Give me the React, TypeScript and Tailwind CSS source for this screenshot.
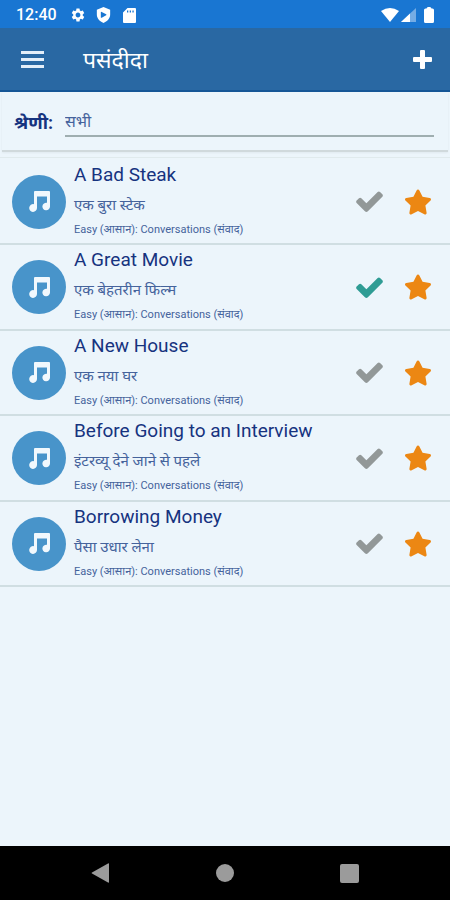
import { useState } from "react";
import { FaStar } from "react-icons/fa";
import { MdSettings } from "react-icons/md";

type Lesson = { title: string; hindi: string; done: boolean };

const lessons: Lesson[] = [
  { title: "A Bad Steak", hindi: "एक बुरा स्टेक", done: false },
  { title: "A Great Movie", hindi: "एक बेहतरीन फिल्म", done: true },
  { title: "A New House", hindi: "एक नया घर", done: false },
  { title: "Before Going to an Interview", hindi: "इंटरव्यू देने जाने से पहले", done: false },
  { title: "Borrowing Money", hindi: "पैसा उधार लेना", done: false },
];

function StatusBar() {
  return (
    <div className="flex h-7 items-center justify-between bg-[#1976d2] px-4 pt-[2px] text-white">
      <div className="flex items-center">
        <span className="w-[54px] text-base font-medium">12:40</span>
        <MdSettings className="size-4" />
        <svg viewBox="0 0 16 18" className="ml-[10px] h-4 w-[15px]" aria-hidden="true">
          <path
            fillRule="evenodd"
            fill="currentColor"
            d="M8 0 15.500 3V8.500C15.500 13 12 16.500 8 18 4 16.500 .500 13 .500 8.500V3ZM6 5.500Q5 5 5 6V11.500Q5 12.500 6 12L11 9.300Q11.700 8.700 11 8.200Z"
          />
        </svg>
        <svg viewBox="0 0 13 15" className="ml-3 h-[15px] w-[13px]" aria-hidden="true">
          <path
            fillRule="evenodd"
            fill="currentColor"
            d="M4.500 0H12Q13 0 13 1V14Q13 15 12 15H1Q0 15 0 14V4.500ZM4 2.500V4.500H5.300V2.500ZM6.700 2.500V4.500H8V2.500ZM9.400 2.500V4.500H10.700V2.500Z"
          />
        </svg>
      </div>
      <div className="flex items-center">
        <svg viewBox="0 0 18 14" className="h-[14px] w-[18px]" aria-hidden="true">
          <path fill="currentColor" d="M0 3Q9-3 18 3L9 14Z" />
        </svg>
        <svg viewBox="0 0 15 14" className="ml-[2px] h-[14px] w-[15px]" aria-hidden="true">
          <path fill="currentColor" opacity=".4" d="M15 0V14H0Z" />
          <path fill="currentColor" d="M9 5.600V14H0Z" />
        </svg>
        <svg viewBox="0 0 10 16" className="ml-2 h-4 w-[10px]" aria-hidden="true">
          <path
            fill="currentColor"
            d="M4 0H6Q7 0 7.500 1.500H8.500Q10 1.500 10 3V14.500Q10 16 8.500 16H1.500Q0 16 0 14.500V3Q0 1.500 1.500 1.500H2.500Q3 0 4 0Z"
          />
        </svg>
      </div>
    </div>
  );
}

function Header() {
  return (
    <header className="flex h-16 items-center border-b-2 border-[#155696] bg-[#2968a3] pr-[18px] pl-[21px] text-white">
      <button type="button" aria-label="Menu" className="text-[#e3eef9]">
        <svg viewBox="0 0 23 17" className="h-[17px] w-[23px]" aria-hidden="true">
          <path fill="currentColor" d="M0 0H23V3H0ZM0 7H23V10H0ZM0 14H23V17H0Z" />
        </svg>
      </button>
      <h1 className="ml-[39px] flex-1 pt-1 text-[23px] leading-8">पसंदीदा</h1>
      <button type="button" aria-label="Add">
        <svg viewBox="0 0 19 19" className="size-[19px]" aria-hidden="true">
          <path
            fill="currentColor"
            d="M8 0H11Q12 0 12 1V7H18Q19 7 19 8V11Q19 12 18 12H12V18Q12 19 11 19H8Q7 19 7 18V12H1Q0 12 0 11V8Q0 7 1 7H7V1Q7 0 8 0Z"
          />
        </svg>
      </button>
    </header>
  );
}

function MusicBadge() {
  return (
    <span className="flex size-[54px] shrink-0 items-center justify-center rounded-full bg-[#4894ca]">
      <svg viewBox="0 0 21 21" className="size-[21px]" aria-hidden="true">
        <path
          fill="#f1f8fd"
          d="M6 0H20Q21 0 21 1V15.500A3.800 3.800 0 1 1 18 11.800V5.500H8V17A3.900 3.900 0 1 1 5 13.200V1Q5 0 6 0Z"
        />
      </svg>
    </span>
  );
}

function LessonRow({ lesson }: { lesson: Lesson }) {
  const [done, setDone] = useState(lesson.done);
  const [starred, setStarred] = useState(true);
  return (
    <li className="flex h-[85px] items-center border-b-2 border-[#d0dee2] pr-[18px] pl-3 even:h-[86px]">
      <MusicBadge />
      <div className="ml-2 min-w-0 flex-1 pb-1">
        <h2 className="text-[19px] leading-7 text-[#16337f]">{lesson.title}</h2>
        <p className="text-[15px] leading-8 text-[#45639c]">{lesson.hindi}</p>
        <p className="text-[11px] leading-[18px] text-[#45639c]">Easy (आसान): Conversations (संवाद)</p>
      </div>
      <button
        type="button"
        aria-label="Completed"
        aria-pressed={done}
        onClick={() => setDone(!done)}
        className={done ? "text-[#2f9c94]" : "text-[#929898]"}
      >
        <svg viewBox="121 302 1550 1220" className="h-[21px] w-[27px]" aria-hidden="true">
          <path
            fill="currentColor"
            d="M1671 566q0 40-28 68l-724 724-136 136q-28 28-68 28t-68-28l-136-136-362-362q-28-28-28-68t28-68l136-136q28-28 68-28t68 28l294 295 656-657q28-28 68-28t68 28l136 136q28 28 28 68z"
          />
        </svg>
      </button>
      <button
        type="button"
        aria-label="Favorite"
        aria-pressed={starred}
        onClick={() => setStarred(!starred)}
        className={starred ? "ml-[21px] text-[#ec8713]" : "ml-[21px] text-[#929898]"}
      >
        <FaStar className="size-7" />
      </button>
    </li>
  );
}

function NavBar() {
  return (
    <nav className="flex h-[54px] items-center justify-between bg-black px-[91px] text-[#9b9b9b]">
      <button type="button" aria-label="Back">
        <svg viewBox="0 0 18 20" className="h-5 w-[18px]" aria-hidden="true">
          <path fill="currentColor" d="M18 1V19Q18 20 17 19.500L1 10.500Q0 10 1 9.500L17 .500Q18 0 18 1Z" />
        </svg>
      </button>
      <button type="button" aria-label="Home" className="size-[18px] rounded-full bg-[#9b9b9b]" />
      <button type="button" aria-label="Recent apps" className="size-[19px] rounded-xs bg-[#9b9b9b]" />
    </nav>
  );
}

export default function App() {
  return (
    <div className="flex min-h-screen flex-col bg-[#ecf5fb] font-[Roboto,'Noto_Sans',sans-serif]">
      <StatusBar />
      <Header />
      <main className="flex-1">
        <div className="mx-[2px] flex h-[60px] items-center border-b-2 border-[#d0d9dc] pt-1 pr-[14px] pl-3 shadow-xs">
          <label htmlFor="category" className="w-[51px] text-lg leading-8 font-bold text-[#16337f]">
            श्रेणी:
          </label>
          <select
            id="category"
            className="h-7 flex-1 appearance-none border-b-2 border-[#9faeb0] bg-transparent text-base text-[#45639c]"
          >
            <option>सभी</option>
          </select>
        </div>
        <ul className="mt-[5px] border-t border-[#e0eaed] pt-[2px]">
          {lessons.map((lesson) => (
            <LessonRow key={lesson.title} lesson={lesson} />
          ))}
        </ul>
      </main>
      <NavBar />
    </div>
  );
}
